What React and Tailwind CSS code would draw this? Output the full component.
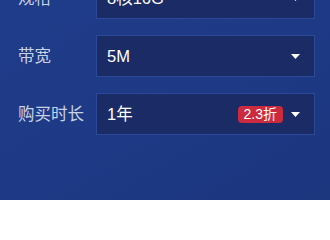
const rows = [
  { label: "规格", value: "8核16G" },
  { label: "带宽", value: "5M" },
  { label: "购买时长", value: "1年", badge: "2.3折" },
];

const Caret = () => (
  <svg width="9" height="5" viewBox="0 0 9 5" className="shrink-0">
    <path d="M0 0H9L4.5 5Z" fill="#ffffff" />
  </svg>
);

export default function App() {
  return (
    <div
      className="w-[330px] h-[200px] overflow-hidden bg-gradient-to-br from-[#1f3c8a] via-[#1e3a86] to-[#1c367e]"
      style={{ fontFamily: '"Liberation Sans", "Noto Sans CJK SC", sans-serif' }}
    >
      <div className="flex flex-col gap-4 -mt-[23px]">
        {rows.map((row) => (
          <div key={row.label} className="flex items-center">
            <div className="w-[96px] pl-[18px] text-[16.5px] text-[#c9d1e4]">
              {row.label}
            </div>
            <div className="w-[219px] h-[42px] flex items-center border border-[#2c4899] bg-[#1a2b66] pl-[10px] pr-[14px]">
              <span className="flex-1 text-[16.5px] text-white">{row.value}</span>
              {row.badge && (
                <span className="mr-2 h-[17px] px-[6px] rounded-[4px] bg-[#cc2a3e] text-[14px] leading-[17px] text-white">
                  {row.badge}
                </span>
              )}
              <Caret />
            </div>
          </div>
        ))}
      </div>
    </div>
  );
}
